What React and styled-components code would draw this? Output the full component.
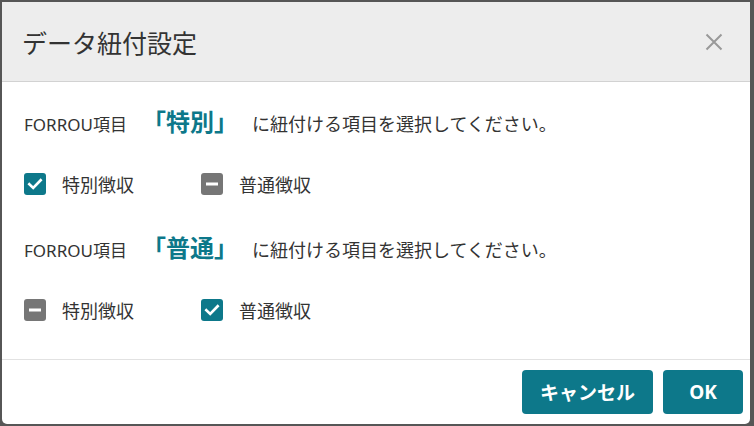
import React from "react";
import styled, { createGlobalStyle } from "styled-components";

const Global = createGlobalStyle`
  html, body { margin: 0; padding: 0; background: #565656; }
  body { font-family: "Noto Sans", "Noto Sans CJK JP", sans-serif; }
  * { box-sizing: border-box; }
`;

const TEAL = "#0d788a";

const Screen = styled.div`
  width: 754px;
  height: 426px;
  padding: 2px 4px 2px 2px;
`;

const Dialog = styled.div`
  width: 748px;
  height: 422px;
  background: #fff;
  border-radius: 0 0 5px 5px;
  display: flex;
  flex-direction: column;
  overflow: hidden;
`;

const Header = styled.div`
  height: 80px;
  flex: none;
  background: #ededed;
  border-bottom: 1px solid #d2d2d2;
  display: flex;
  align-items: center;
  justify-content: space-between;
  padding: 0 27px 0 20px;
`;

const Title = styled.h1`
  margin: 0;
  font-size: 25px;
  font-weight: 400;
  color: #333;
`;

const CloseButton = styled.button`
  border: 0;
  background: none;
  padding: 0;
  width: 19px;
  height: 19px;
  display: flex;
  align-items: center;
  justify-content: center;
  cursor: pointer;
`;

const Body = styled.div`
  flex: 1;
  padding: 27px 22px 0 22px;
  display: flex;
  flex-direction: column;
  gap: 40px;
`;

const Section = styled.div`
  display: flex;
  flex-direction: column;
  gap: 34px;
`;

const Prompt = styled.p`
  margin: 0;
  height: 30px;
  line-height: 30px;
  font-size: 17px;
  color: #333;
  white-space: nowrap;
`;

const Target = styled.span`
  font-size: 24px;
  font-weight: 700;
  color: ${TEAL};
  line-height: 1;
  margin: 0 14px 0 15px;
`;

const Rest = styled.span`
  font-size: 18px;
`;

const Options = styled.div`
  display: flex;
  height: 22px;
  align-items: center;
`;

const Option = styled.label`
  width: 177px;
  display: flex;
  align-items: center;
  gap: 16px;
  font-size: 18px;
  color: #333;
  cursor: pointer;
`;

const Box = styled.span`
  width: 22px;
  height: 22px;
  border-radius: 3px;
  flex: none;
  display: flex;
  align-items: center;
  justify-content: center;
  background: ${(p) => (p.$checked ? TEAL : "#767676")};
`;

const Footer = styled.div`
  flex: none;
  height: 65px;
  border-top: 1px solid #e2e2e2;
  display: flex;
  justify-content: flex-end;
  align-items: flex-start;
  gap: 10px;
  padding: 10px 7px 0 0;
`;

const Button = styled.button`
  height: 44px;
  width: ${(p) => p.$w}px;
  border: 0;
  border-radius: 4px;
  background: ${TEAL};
  color: #fff;
  font-family: "Noto Sans", "Noto Sans CJK JP", sans-serif;
  font-size: 19px;
  font-weight: 700;
  cursor: pointer;
`;

function Check({ state }) {
  return (
    <Box $checked={state === "checked"}>
      {state === "checked" ? (
        <svg width="16" height="16" viewBox="0 0 16 16">
          <path d="M2.3 8.2 L6.2 12 L13.7 4.2" fill="none" stroke="#fff" strokeWidth="2.6" strokeLinecap="square" />
        </svg>
      ) : (
        <svg width="14" height="14" viewBox="0 0 14 14">
          <rect x="1" y="5.5" width="12" height="3" fill="#fff" />
        </svg>
      )}
    </Box>
  );
}

const sections = [
  { target: "特別", states: ["checked", "indeterminate"] },
  { target: "普通", states: ["indeterminate", "checked"] },
];
const labels = ["特別徴収", "普通徴収"];

export default function App() {
  return (
    <>
      <Global />
      <Screen>
        <Dialog>
          <Header>
            <Title>データ紐付設定</Title>
            <CloseButton aria-label="close">
              <svg width="18" height="18" viewBox="0 0 18 18">
                <path d="M1.5 1.5 L16.5 16.5 M16.5 1.5 L1.5 16.5" stroke="#999" strokeWidth="2" />
              </svg>
            </CloseButton>
          </Header>
          <Body>
            {sections.map((s) => (
              <Section key={s.target}>
                <Prompt>
                  FORROU項目<Target>「{s.target}」</Target>
                  <Rest>に紐付ける項目を選択してください。</Rest>
                </Prompt>
                <Options>
                  {labels.map((l, i) => (
                    <Option key={l}>
                      <Check state={s.states[i]} />
                      {l}
                    </Option>
                  ))}
                </Options>
              </Section>
            ))}
          </Body>
          <Footer>
            <Button $w={131}>キャンセル</Button>
            <Button $w={80}>OK</Button>
          </Footer>
        </Dialog>
      </Screen>
    </>
  );
}
